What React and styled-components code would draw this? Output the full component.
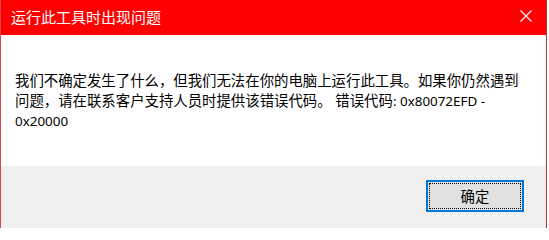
import styled, { createGlobalStyle } from "styled-components";

const GlobalStyle = createGlobalStyle`
  html, body {
    margin: 0;
    padding: 0;
    background: #ffffff;
  }
  body {
    font-family: "Noto Sans", "Noto Sans CJK SC", sans-serif;
  }
`;

export default function App() {
  return (
    <>
      <GlobalStyle />
      <StyledWindow>
        <StyledTitleBar>
          <StyledTitle>运行此工具时出现问题</StyledTitle>
          <StyledClose aria-label="关闭">
            <svg width="12" height="12" viewBox="0 0 12 12">
              <path d="M0.5 0.5L11.5 11.5M11.5 0.5L0.5 11.5" stroke="#ffffff" strokeWidth="1.1" fill="none" />
            </svg>
          </StyledClose>
        </StyledTitleBar>
        <StyledContent>
          <StyledMessage>
            我们不确定发生了什么，但我们无法在你的电脑上运行此工具。如果你仍然遇到问题，请在联系客户支持人员时提供该错误代码。 错误代码<StyledCode>: 0x80072EFD - 0x20000</StyledCode>
          </StyledMessage>
        </StyledContent>
        <StyledFooter>
          <StyledButton>
            <StyledFocus>确定</StyledFocus>
          </StyledButton>
        </StyledFooter>
      </StyledWindow>
    </>
  );
}

const StyledWindow = styled.div`
  width: 545px;
  height: 228px;
  border-left: 1px solid #e0454a;
  border-right: 1px solid #b8343a;
  display: flex;
  flex-direction: column;
  overflow: hidden;
`;

const StyledTitleBar = styled.div`
  height: 35px;
  margin-left: -1px;
  background: #ff0000;
  display: flex;
  align-items: center;
  justify-content: space-between;
  flex-shrink: 0;
`;

const StyledTitle = styled.span`
  padding-left: 11px;
  color: #ffffff;
  font-family: "Noto Sans CJK SC", sans-serif;
  font-size: 15px;
  line-height: 20px;
  margin-top: -2px;
`;

const StyledClose = styled.div`
  width: 40px;
  height: 35px;
  display: flex;
  align-items: center;
  justify-content: center;
  padding-bottom: 3px;
  box-sizing: border-box;
`;

const StyledContent = styled.div`
  height: 131px;
  background: #ffffff;
  padding: 36px 0 0 14px;
  box-sizing: border-box;
  flex-shrink: 0;
`;

const StyledMessage = styled.p`
  margin: 0;
  width: 510px;
  color: #000000;
  font-family: "Noto Sans", "Noto Sans CJK SC", sans-serif;
  font-size: 14.4px;
  line-height: 20px;
`;

const StyledCode = styled.span`
  font-size: 13.4px;
`;

const StyledFooter = styled.div`
  flex: 1;
  background: #f0f0f0;
  display: flex;
  justify-content: flex-end;
  align-items: flex-start;
  padding: 14px 22px 0 0;
`;

const StyledButton = styled.button`
  width: 98px;
  height: 32px;
  padding: 1px;
  box-sizing: border-box;
  background: #e1e1e1;
  border: 2px solid #0078d7;
  display: flex;
  cursor: pointer;
`;

const StyledFocus = styled.span`
  flex: 1;
  border: 1px dotted #000000;
  display: flex;
  align-items: center;
  justify-content: center;
  color: #000000;
  font-family: "Noto Sans CJK SC", sans-serif;
  font-size: 14.4px;
  line-height: 18px;
`;
